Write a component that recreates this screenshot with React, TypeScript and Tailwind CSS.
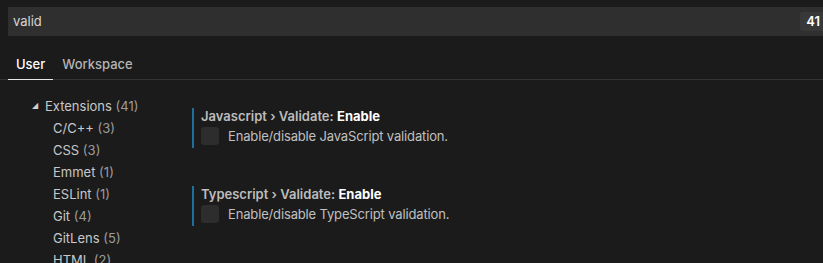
import React from "react";

const groups = [
  ["C/C++", 3],
  ["CSS", 3],
  ["Emmet", 1],
  ["ESLint", 1],
  ["Git", 4],
  ["GitLens", 5],
  ["HTML", 2],
] as const;

const settings = [
  { prefix: "Javascript", desc: "Enable/disable JavaScript validation." },
  { prefix: "Typescript", desc: "Enable/disable TypeScript validation." },
];

export default function App() {
  return (
    <div
      className="w-[823px] h-[263px] overflow-hidden bg-[#1b1b1b] text-[#cccccc] text-[13px]"
      style={{ fontFamily: "Inter, 'Noto Sans', sans-serif" }}
    >
      {/* Search box */}
      <div className="pt-[7px] pl-2">
        <div className="w-[822px] h-[29px] bg-[#2f2f2f] flex items-center pl-[5px] pr-[4px] justify-between">
          <span className="text-[#d6d6d6]">valid</span>
          <span className="h-[19px] px-[6px] bg-[#383838] rounded-[3px] text-white font-semibold flex items-center">41</span>
        </div>
      </div>

      {/* Tabs */}
      <div className="mt-[19px] pl-2 flex border-b border-[#343434]">
        <div className="px-2 pb-[4px] border-b border-[#e8e8e8] -mb-px text-white font-medium">User</div>
        <div className="pl-[9px] pb-[4px] text-[#b4b4b4] font-medium">Workspace</div>
      </div>

      <div className="flex">
        {/* Tree */}
        <div className="w-[192px] pl-[32px] pt-[16px] shrink-0">
          <div className="h-[22px] flex items-center text-[#c8c8c8]">
            <span className="w-[13px] text-[8px] text-[#d0d0d0] -mt-[4px]">◢</span>
            <span>
              Extensions <span className="text-[#9c9c9c]">(41)</span>
            </span>
          </div>
          {groups.map(([name, count]) => (
            <div key={name} className="h-[22px] flex items-center pl-[21px] text-[#c8c8c8]">
              {name}&nbsp;<span className="text-[#9c9c9c]">({count})</span>
            </div>
          ))}
        </div>

        {/* Settings */}
        <div className="pt-[28px] flex flex-col gap-[38px]">
          {settings.map((s) => (
            <div key={s.prefix} className="border-l-2 border-[#1f6f9c] pl-[7px] h-[40px] flex flex-col">
              <div className="font-semibold text-[#bdbdbd] leading-[16px]">
                {s.prefix} › Validate: <span className="text-white font-bold">Enable</span>
              </div>
              <div className="flex items-center mt-[3px]">
                <div className="w-[18px] h-[18px] rounded-[3px] bg-[#2d2d2d]" />
                <span className="ml-[9px] text-[#c0c0c0] tracking-[-0.15px]">{s.desc}</span>
              </div>
            </div>
          ))}
        </div>
      </div>
    </div>
  );
}
